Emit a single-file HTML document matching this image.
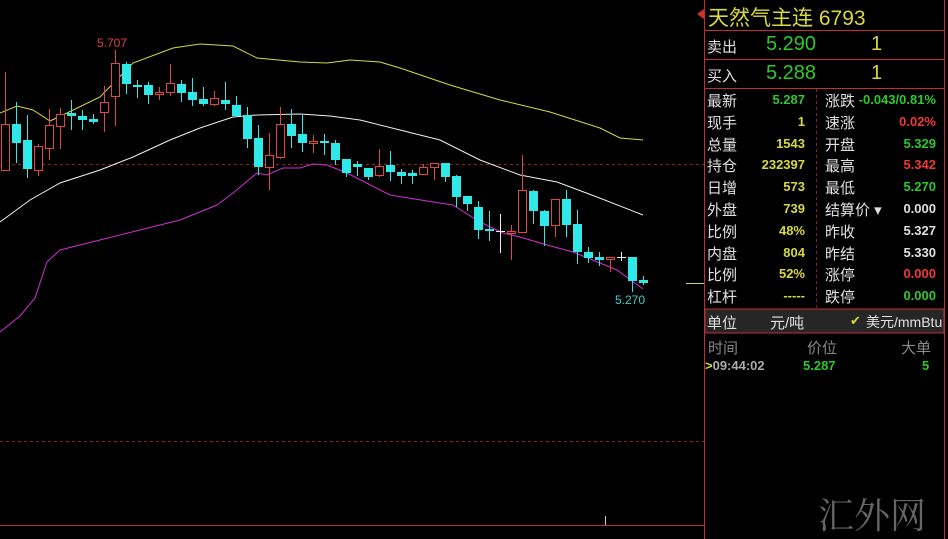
<!DOCTYPE html>
<html><head><meta charset="utf-8"><style>
body{margin:0;width:948px;height:539px;background:#000;overflow:hidden;position:relative;font-family:"Liberation Sans","Noto Sans CJK SC",sans-serif}
.a{position:absolute;white-space:nowrap}
.l{color:#e0e0e0;font-size:15px}
.v{font-weight:bold;font-size:13px;text-align:right}
.g{color:#2ec82e}.y{color:#d8d840}.r{color:#f03838}.w{color:#e0e0e0}
</style></head><body>
<svg class="a" style="left:0;top:0" width="948" height="539">
<line x1="0" y1="164.5" x2="704" y2="164.5" stroke="#902020" stroke-dasharray="3,3"/>
<line x1="0" y1="441.5" x2="704" y2="441.5" stroke="#902020" stroke-dasharray="3,3"/>
<line x1="0" y1="525.5" x2="704" y2="525.5" stroke="#c03030"/>
<line x1="704.5" y1="0" x2="704.5" y2="539" stroke="#c03030"/>
<line x1="944.5" y1="0" x2="944.5" y2="539" stroke="#c03030"/>
<polygon points="697,14 704,9 704,19" fill="#d03030"/>
<line x1="605.5" y1="516" x2="605.5" y2="525" stroke="#ccc"/>
<line x1="686" y1="283.5" x2="704" y2="283.5" stroke="#d8d840"/>
<polyline fill="none" stroke="#d8d840" stroke-width="1" points="0,113 17,106 33,110 50,121 67,113 100,97 133,63 173,48 200,44 233,46 257,58 300,62 327,63 350,60 380,62 400,68 450,85 500,100 550,112 600,128 620,138 643,140"/>
<polyline fill="none" stroke="#f0f0f0" stroke-width="1" points="0,222 30,200 60,183 100,170 133,157 170,140 200,128 233,117 257,115 300,114 330,116 360,120 400,130 440,140 480,160 520,175 557,182 597,197 643,215"/>
<polyline fill="none" stroke="#d030d0" stroke-width="1" points="0,332 20,316 35,298 47,262 60,250 100,240 140,230 180,220 217,205 233,193 257,173 267,175 283,168 300,168 313,164 327,165 347,173 390,195 427,201 453,205 480,222 503,233 520,237 547,245 573,252 617,270 643,289"/>
<g id="c"></g>
<text x="97" y="47" fill="#e04040" font-size="12" font-family="Liberation Sans">5.707</text>
<text x="615" y="304" fill="#40d0d0" font-size="12" font-family="Liberation Sans">5.270</text>
<line x1="705" y1="30.5" x2="944" y2="30.5" stroke="#c03030"/>
<line x1="705" y1="59.5" x2="944" y2="59.5" stroke="#c03030"/>
<line x1="705" y1="88.5" x2="944" y2="88.5" stroke="#c03030"/>
<line x1="816.5" y1="89" x2="816.5" y2="308" stroke="#902020" stroke-dasharray="3,3"/>
<rect x="705" y="309" width="239" height="24" fill="#262626" stroke="#c03030"/>
</svg>
<div class="a" style="left:708px;top:2px;font-size:21px;color:#d8d840">天然气主连 6793</div>
<div class="a l" style="left:707px;top:36px">卖出</div><div class="a g" style="left:766px;top:33px;font-size:20px">5.290</div><div class="a y" style="left:871px;top:33px;font-size:20px">1</div>
<div class="a l" style="left:707px;top:65px">买入</div><div class="a g" style="left:766px;top:62px;font-size:20px">5.288</div><div class="a y" style="left:871px;top:62px;font-size:20px">1</div>
<div id="rows"></div>
<div class="a l" style="left:707px;top:312px">单位</div><div class="a l" style="left:770px;top:312px">元/吨</div>
<div class="a y" style="left:850px;top:313px;font-size:13px">✔</div><div class="a l" style="left:866px;top:312px;font-size:14px">美元/mmBtu</div>
<div class="a" style="left:708px;top:337px;color:#888;font-size:15px">时间</div>
<div class="a" style="left:807px;top:337px;color:#888;font-size:15px">价位</div>
<div class="a" style="left:901px;top:337px;color:#888;font-size:15px">大单</div>
<div class="a" style="left:705px;top:358px;color:#aaa;font-size:13px;font-weight:bold"><span class="y">&gt;</span>09:44:02</div>
<div class="a g" style="left:803px;top:358px;font-size:13px;font-weight:bold">5.287</div>
<div class="a g" style="left:922px;top:358px;font-size:13px;font-weight:bold">5</div>
<div class="a" style="left:818px;top:488px;font-size:36px;color:#666;font-family:'Noto Serif CJK SC',serif">汇外网</div>
<script>
var C=[[5,0,124,170,72,145],[16,1,124,143,102,163],[27,1,140,169,115,178],[38,0,146,170,144,176],[49,0,125,148,109,160],[60,0,114,126,108,149],[71,1,113,116,100,130],[82,1,116,120,110,130],[93,1,119,122,114,124],[104,0,102,112,86,132],[115,0,63,96,50,126],[126,1,64,84,62,94],[137,1,85,87,80,98],[148,1,85,95,82,104],[159,0,92,94,87,100],[170,0,83,92,64,96],[181,1,84,93,80,102],[192,1,92,100,78,106],[203,1,99,104,87,106],[214,0,98,104,91,106],[225,1,100,104,82,110],[236,1,105,116,96,117],[247,1,115,139,107,148],[258,1,138,167,125,175],[269,0,155,167,133,190],[280,0,124,157,107,159],[291,1,124,136,109,148],[302,1,134,143,114,152],[313,0,141,143,135,153],[324,1,141,143,134,155],[335,1,143,160,140,165],[346,1,159,173,159,177],[357,1,164,167,161,176],[368,1,168,177,168,180],[379,0,166,175,149,177],[390,1,165,172,151,181],[401,1,172,176,169,184],[412,1,173,176,170,184],[423,0,167,174,164,175],[434,0,163,167,163,180],[445,1,163,177,163,182],[456,1,176,197,175,207],[467,1,196,204,196,211],[478,1,207,230,201,239],[489,1,229,231,211,241],[500,2,231,231,214,253],[511,0,231,233,225,260],[522,0,190,232,155,232],[533,1,191,211,190,224],[544,1,211,226,210,246],[555,0,199,225,199,237],[566,1,199,225,190,237],[577,1,224,252,210,264],[588,1,252,258,247,263],[599,1,257,260,252,266],[610,0,257,259,257,272],[621,2,257,257,252,261],[632,1,257,281,257,292],[643,1,280,283,276,285]];
var s='';C.forEach(function(c){var x=c[0],col=c[1]==0?'#e04848':c[1]==1?'#30e8e8':'#f0f0f0';
s+='<line x1="'+(x+.5)+'" y1="'+c[4]+'" x2="'+(x+.5)+'" y2="'+c[5]+'" stroke="'+col+'"/>';
var h=Math.max(c[3]-c[2],1);
if(c[1]==1)s+='<rect x="'+(x-4)+'" y="'+c[2]+'" width="9" height="'+h+'" fill="'+col+'"/>';
else if(c[1]==0)s+='<rect x="'+(x-3.5)+'" y="'+(c[2]+.5)+'" width="8" height="'+h+'" fill="#000" stroke="'+col+'"/>';
else s+='<line x1="'+(x-4)+'" y1="'+(c[2]+.5)+'" x2="'+(x+5)+'" y2="'+(c[2]+.5)+'" stroke="'+col+'"/>';});
document.getElementById('c').innerHTML=s;
var R=[["最新","5.287","g","涨跌","-0.043/0.81%","g"],["现手","1","y","速涨","0.02%","r"],["总量","1543","y","开盘","5.329","g"],["持仓","232397","y","最高","5.342","r"],["日增","573","y","最低","5.270","g"],["外盘","739","y","结算价 ▾","0.000","w"],["比例","48%","y","昨收","5.327","w"],["内盘","804","y","昨结","5.330","w"],["比例","52%","y","涨停","0.000","r"],["杠杆","-----","y","跌停","0.000","g"]];
var h='';R.forEach(function(r,i){var t=90+i*21.8;
h+='<div class="a l" style="left:707px;top:'+t+'px">'+r[0]+'</div><div class="a v '+r[2]+'" style="right:143px;top:'+(t+2)+'px">'+r[1]+'</div><div class="a l" style="left:825px;top:'+t+'px">'+r[3]+'</div><div class="a v '+r[5]+'" style="right:12px;top:'+(t+2)+'px">'+r[4]+'</div>';});
document.getElementById('rows').innerHTML=h;
</script>
</body></html>
